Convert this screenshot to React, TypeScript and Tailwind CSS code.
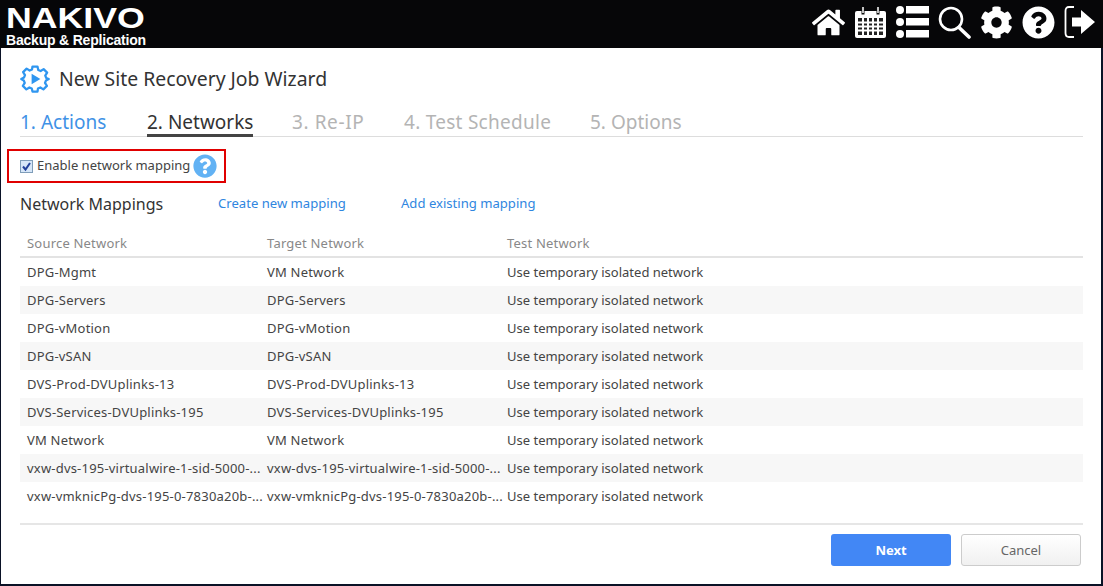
import { FaCog, FaHome, FaQuestionCircle } from "react-icons/fa";

const rows = [
  ["DPG-Mgmt", "VM Network"],
  ["DPG-Servers", "DPG-Servers"],
  ["DPG-vMotion", "DPG-vMotion"],
  ["DPG-vSAN", "DPG-vSAN"],
  ["DVS-Prod-DVUplinks-13", "DVS-Prod-DVUplinks-13"],
  ["DVS-Services-DVUplinks-195", "DVS-Services-DVUplinks-195"],
  ["VM Network", "VM Network"],
  ["vxw-dvs-195-virtualwire-1-sid-5000-...", "vxw-dvs-195-virtualwire-1-sid-5000-..."],
  ["vxw-vmknicPg-dvs-195-0-7830a20b-...", "vxw-vmknicPg-dvs-195-0-7830a20b-..."],
];

function CalendarIcon() {
  return (
    <svg width="33" height="34" viewBox="0 0 33 34" fill="none" stroke="white">
      <rect x="1" y="6" width="31" height="27" rx="2" fill="white" stroke="none" />
      <path d="M4 13h25v17H4z" fill="#222" stroke="none" />
      <path d="M4 17.5h25M4 21.5h25M4 25.5h25M9 13v17M14 13v17M19 13v17M24 13v17" strokeWidth="2" />
      <path d="M9 2.5v7M24 2.5v7" strokeWidth="3" stroke="#111" />
      <path d="M9 2v6M24 2v6" strokeWidth="1.5" />
    </svg>
  );
}

function ListIcon() {
  return (
    <svg width="33" height="34" viewBox="0 0 33 34" fill="white">
      <circle cx="4" cy="5" r="4" />
      <circle cx="4" cy="17" r="4" />
      <circle cx="4" cy="29" r="4" />
      <rect x="10" y="1" width="23" height="7.5" />
      <rect x="10" y="13" width="23" height="7.5" />
      <rect x="10" y="25" width="23" height="7.5" />
    </svg>
  );
}

function SearchIcon() {
  return (
    <svg width="33" height="34" viewBox="0 0 33 34" fill="none" stroke="white">
      <circle cx="13" cy="14" r="11" strokeWidth="2.6" />
      <path d="M21 22.5 31 32" strokeWidth="3.6" strokeLinecap="round" />
    </svg>
  );
}

function SignOutIcon() {
  return (
    <svg width="33" height="34" viewBox="0 0 33 34" fill="none">
      <path d="M10 2H5Q1.5 2 1.5 6V28Q1.5 32 5 32H10" stroke="white" strokeWidth="1.8" />
      <path d="M8 12.5h9V5l14 12-14 12v-7.5H8z" fill="white" />
    </svg>
  );
}

function GearLogo() {
  return (
    <svg width="30" height="30" viewBox="0 0 24 24" fill="none" stroke="#2f96f0" strokeWidth="1.8">
      <path d="M10 2h4l.6 2.8 1.9.8 2.4-1.5 2.8 2.8-1.5 2.4.8 1.9L23 12l-2.2 1.2-.8 1.9 1.5 2.4-2.8 2.8-2.4-1.5-1.9.8L14 22h-4l-.6-2.4-1.9-.8-2.4 1.5-2.8-2.8 1.5-2.4-.8-1.9L1 12l2.2-1.2.8-1.9-1.5-2.4 2.8-2.8 2.4 1.5 1.9-.8z" strokeLinejoin="round" />
      <path d="M9.3 7.8v8.400l7-4.200z" fill="#2f96f0" stroke="none" />
    </svg>
  );
}

export default function App() {
  return (
    <div className="w-[1103px] h-[586px] bg-[#0a1226] flex flex-col overflow-hidden font-['Noto_Sans',sans-serif]">
      <div className="h-[48px] flex justify-between shrink-0 pl-[6px] pr-[6px] bg-[#060608] bg-[radial-gradient(#26262e_0.6px,transparent_0.6px)] bg-[size:6px_6px]">
        <div className="flex flex-col text-white font-['Liberation_Sans',sans-serif]">
          <div className="text-[30px] leading-[28px] mt-[4px] font-bold scale-x-[1.19] origin-left">NAKIVO</div>
          <div className="text-[14px] leading-[14px] mt-px font-bold tracking-[-0.2px]">Backup &amp; Replication</div>
        </div>
        <div className="flex items-center gap-[9px] pb-[4px] text-white">
          <FaHome size={33} />
          <CalendarIcon />
          <ListIcon />
          <SearchIcon />
          <FaCog size={33} />
          <FaQuestionCircle size={33} />
          <SignOutIcon />
        </div>
      </div>

      <div className="w-[1100px] h-[536px] ml-[1px] bg-white flex flex-col px-[19px]">
        <div className="flex items-center h-[60px] gap-[9px] pt-[2px]">
          <GearLogo />
          <span className="text-[19.4px] text-[#333]">New Site Recovery Job Wizard</span>
        </div>

        <div className="flex w-[1063px] h-[29px] border-b border-[#ddd] text-[19px] leading-[28px] text-[#b4b4b4]">
          <span className="text-[#3f92e6] w-[127px]">1. Actions</span>
          <span className="text-[#333] w-[145px]"><span className="inline-block h-[29px] border-b-[3px] border-[#444]">2. Networks</span></span>
          <span className="w-[112px] tracking-[0.6px]">3. Re-IP</span>
          <span className="w-[186px] tracking-[0.27px]">4. Test Schedule</span>
          <span>5. Options</span>
        </div>

        <div className="mt-[12px] -ml-[13px] w-[219px] h-[34px] border-2 border-[#e00000] flex items-center pl-[11px] gap-[4px] whitespace-nowrap">
          <label className="relative flex w-[13px] h-[13px] shrink-0">
            <input type="checkbox" defaultChecked className="appearance-none w-[13px] h-[13px] border border-[#7f9db9] bg-[#d6e6f8]" />
            <svg viewBox="0 0 13 13" className="absolute inset-0 w-[13px] h-[13px]" fill="none" stroke="#21409a" strokeWidth="2">
              <path d="M3 6.5l2.500 3L10 3" />
            </svg>
          </label>
          <span className="text-[13px] text-[#444] w-[152px]">Enable network mapping</span>
          <FaQuestionCircle size={24} className="text-[#62b2f4] shrink-0" />
        </div>

        <div className="flex items-center mt-[9px] h-[24px] text-[13.1px] text-[#2f86e0]">
          <span className="text-[16px] text-[#333] w-[198px]">Network Mappings</span>
          <span className="w-[183px]">Create new mapping</span>
          <span>Add existing mapping</span>
        </div>

        <div className="mt-[14px] w-[1063px] text-[13px] text-[#444] tracking-[0.2px]">
          <div className="grid grid-cols-[240px_240px_1fr] h-[28px] items-center pl-[7px] pt-[2px] border-b-2 border-[#e3e3e3] text-[#888]">
            <span>Source Network</span>
            <span>Target Network</span>
            <span>Test Network</span>
          </div>
          {rows.map((r, i) => (
            <div key={r[0]} className={`grid grid-cols-[240px_240px_1fr] h-[28px] items-center pl-[7px] pt-[2px] ${i % 2 ? "bg-[#f7f7f7]" : ""}`}>
              <span className="whitespace-nowrap">{r[0]}</span>
              <span className="whitespace-nowrap">{r[1]}</span>
              <span className="tracking-normal">Use temporary isolated network</span>
            </div>
          ))}
        </div>

        <div className="mt-[13px] w-[1063px] border-t-2 border-[#e6e6e6] flex justify-end gap-[10px] pt-[9px] pr-[2px]">
          <button className="w-[120px] h-[32px] pt-px rounded-[3px] bg-[#4287f5] text-white text-[13px] font-bold">Next</button>
          <button className="w-[120px] h-[32px] pt-px rounded-[3px] bg-gradient-to-b from-white to-[#f0f0f0] border border-[#ccc] text-[#666] text-[13px]">Cancel</button>
        </div>
      </div>
    </div>
  );
}
